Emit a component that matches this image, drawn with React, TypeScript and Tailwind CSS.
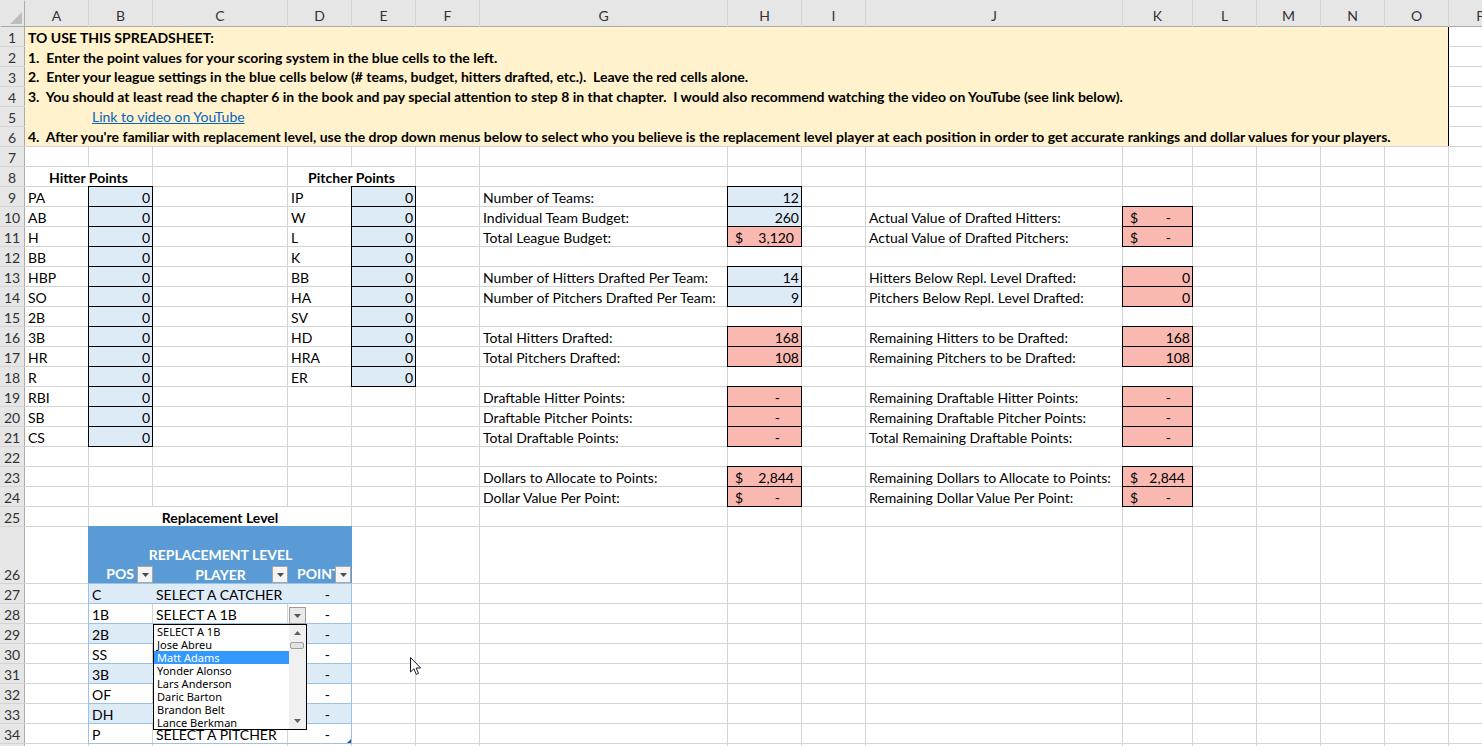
import React from 'react';

type Cell = {
  v?: React.ReactNode;
  cls?: string;
  align?: 'l' | 'r' | 'c' | 'dash' | 'acct' | 'raw';
};

const COLS = ['A', 'B', 'C', 'D', 'E', 'F', 'G', 'H', 'I', 'J', 'K', 'L', 'M', 'N', 'O', 'P'];
const ROWS = 35;

const BLUE = 'bg-[#DDEBF7] shadow-[0_0_0_1px_#000]';
const RED = 'bg-[#F9B9B1] shadow-[0_0_0_1px_#000]';

const data: Record<string, Cell> = {};
const covered = new Set<string>();

function merge(key: string, cell: Cell, cols: number, rows: number) {
  data[key] = cell;
  const ci = COLS.indexOf(key[0]);
  const r = parseInt(key.slice(1), 10);
  for (let i = 0; i < cols; i++)
    for (let j = 0; j < rows; j++) if (i || j) covered.add(COLS[ci + i] + (r + j));
}

function Dollar({ v }: { v: string }) {
  return (
    <span className="flex w-full justify-between">
      <span>$</span>
      <span className={v === '-' ? 'pr-[14px]' : ''}>{v}</span>
    </span>
  );
}

// instructions block
const notes = [
  'TO USE THIS SPREADSHEET:',
  '1.  Enter the point values for your scoring system in the blue cells to the left.',
  '2.  Enter your league settings in the blue cells below (# teams, budget, hitters drafted, etc.).  Leave the red cells alone.',
  '3.  You should at least read the chapter 6 in the book and pay special attention to step 8 in that chapter.  I would also recommend watching the video on YouTube (see link below).',
  '',
  "4.  After you're familiar with replacement level, use the drop down menus below to select who you believe is the replacement level player at each position in order to get accurate rankings and dollar values for your players.",
];

merge(
  'A1',
  {
    align: 'raw',
    cls: 'col-span-15 row-span-6 bg-[#FFF2CC] shadow-[1px_0_0_#000]',
    v: (
      <div className="flex w-full flex-col">
        {notes.map((n, i) => (
          <div key={i} className="flex h-[20px] items-end pb-[1px] pl-[3px] font-bold leading-[17px] whitespace-pre">
            {i === 4 ? (
              <span className="pl-[64px] font-normal text-[#0563C1] underline">Link to video on YouTube</span>
            ) : (
              n
            )}
          </div>
        ))}
      </div>
    ),
  },
  15,
  6
);

merge('A8', { v: 'Hitter Points', align: 'c', cls: 'col-span-2 bg-white font-bold' }, 2, 1);
merge('D8', { v: 'Pitcher Points', align: 'c', cls: 'col-span-2 bg-white font-bold' }, 2, 1);

const hitters = ['PA', 'AB', 'H', 'BB', 'HBP', 'SO', '2B', '3B', 'HR', 'R', 'RBI', 'SB', 'CS'];
hitters.forEach((h, i) => {
  data['A' + (9 + i)] = { v: h };
  data['B' + (9 + i)] = { v: '0', align: 'r', cls: BLUE };
});
const pitchers = ['IP', 'W', 'L', 'K', 'BB', 'HA', 'SV', 'HD', 'HRA', 'ER'];
pitchers.forEach((p, i) => {
  data['D' + (9 + i)] = { v: p };
  data['E' + (9 + i)] = { v: '0', align: 'r', cls: BLUE };
});

const league: [number, string, string, string, 'r' | 'dash' | 'acct'][] = [
  [9, 'Number of Teams:', '12', BLUE, 'r'],
  [10, 'Individual Team Budget:', '260', BLUE, 'r'],
  [11, 'Total League Budget:', '3,120', RED, 'acct'],
  [13, 'Number of Hitters Drafted Per Team:', '14', BLUE, 'r'],
  [14, 'Number of Pitchers Drafted Per Team:', '9', BLUE, 'r'],
  [16, 'Total Hitters Drafted:', '168', RED, 'r'],
  [17, 'Total Pitchers Drafted:', '108', RED, 'r'],
  [19, 'Draftable Hitter Points:', '-', RED, 'dash'],
  [20, 'Draftable Pitcher Points:', '-', RED, 'dash'],
  [21, 'Total Draftable Points:', '-', RED, 'dash'],
  [23, 'Dollars to Allocate to Points:', '2,844', RED, 'acct'],
  [24, 'Dollar Value Per Point:', '-', RED, 'acct'],
];
league.forEach(([r, label, v, cls, align]) => {
  data['G' + r] = { v: label };
  data['H' + r] = { v: align === 'acct' ? <Dollar v={v} /> : v, cls, align };
});

const remaining: [number, string, string, 'r' | 'dash' | 'acct'][] = [
  [10, 'Actual Value of Drafted Hitters:', '-', 'acct'],
  [11, 'Actual Value of Drafted Pitchers:', '-', 'acct'],
  [13, 'Hitters Below Repl. Level Drafted:', '0', 'r'],
  [14, 'Pitchers Below Repl. Level Drafted:', '0', 'r'],
  [16, 'Remaining Hitters to be Drafted:', '168', 'r'],
  [17, 'Remaining Pitchers to be Drafted:', '108', 'r'],
  [19, 'Remaining Draftable Hitter Points:', '-', 'dash'],
  [20, 'Remaining Draftable Pitcher Points:', '-', 'dash'],
  [21, 'Total Remaining Draftable Points:', '-', 'dash'],
  [23, 'Remaining Dollars to Allocate to Points:', '2,844', 'acct'],
  [24, 'Remaining Dollar Value Per Point:', '-', 'acct'],
];
remaining.forEach(([r, label, v, align]) => {
  data['J' + r] = { v: label };
  data['K' + r] = { v: align === 'acct' ? <Dollar v={v} /> : v, cls: RED, align };
});

merge('B25', { v: 'Replacement Level', align: 'c', cls: 'col-span-3 bg-white font-bold' }, 3, 1);

function FilterBtn() {
  return (
    <div className="absolute right-0 bottom-0 flex h-[17px] w-[16px] items-center justify-center border border-[#A6A6A6] bg-[#F4F4F4]">
      <svg width="7" height="4" viewBox="0 0 7 4">
        <path d="M0 0h7L3.5 4z" fill="#4a4a4a" />
      </svg>
    </div>
  );
}

merge(
  'B26',
  {
    align: 'raw',
    cls: 'col-span-3 bg-[#5B9BD5] shadow-[0_0_0_1px_#5B9BD5]',
    v: (
      <div className="flex h-full w-full font-bold text-white">
        <div className="relative flex w-[64px] items-end justify-end pr-[19px] pb-[1px] leading-[17px]">
          POS
          <FilterBtn />
        </div>
        <div className="relative flex w-[135px] items-end justify-center text-center leading-[20px]">
          <div className="mb-[-2px]">
            REPLACEMENT LEVEL
            <br />
            PLAYER
          </div>
          <FilterBtn />
        </div>
        <div className="relative flex w-[63px] items-end overflow-hidden pl-[9px] pb-[1px] leading-[17px]">
          POINTS
          <FilterBtn />
        </div>
      </div>
    ),
  },
  3,
  1
);

// rows hidden behind the open list show no text
const repl = [
  ['C', 'SELECT A CATCHER'],
  ['1B', 'SELECT A 1B'],
  ['2B', ''],
  ['SS', ''],
  ['3B', ''],
  ['OF', ''],
  ['DH', ''],
  ['P', 'SELECT A PITCHER'],
];
repl.forEach(([pos, player], i) => {
  const band = i % 2 === 0;
  merge(
    'B' + (27 + i),
    {
      align: 'raw',
      cls: band
        ? 'col-span-3 bg-[#DDEBF7] shadow-[0_0_0_1px_#9BC2E6]'
        : 'col-span-3 bg-white shadow-[0_0_0_1px_#9BC2E6]',
      v: (
        <div className="flex h-full w-full leading-[17px]">
          <div className={`flex w-[64px] items-end pl-[3px] ${band ? '' : 'border-r border-[#D4D4D4]'}`}>{pos}</div>
          <div className={`flex w-[135px] items-end pl-[3px] ${band ? '' : 'border-r border-[#D4D4D4]'}`}>{player}</div>
          <div className="flex w-[63px] items-end justify-end pr-[21px]">-</div>
        </div>
      ),
    },
    3,
    1
  );
});

const alignCls: Record<string, string> = {
  l: 'justify-start pl-[3px]',
  r: 'justify-end pr-[2px]',
  c: 'justify-center',
  dash: 'justify-end pr-[21px]',
  acct: 'pl-[7px] pr-[7px]',
  raw: 'items-stretch',
};

const players = [
  'SELECT A 1B',
  'Jose Abreu',
  'Matt Adams',
  'Yonder Alonso',
  'Lars Anderson',
  'Daric Barton',
  'Brandon Belt',
  'Lance Berkman',
];

export default function App() {
  const items: React.ReactNode[] = [];

  items.push(
    <div key="corner" className="relative bg-[#E6E6E6] shadow-[1px_1px_0_#ABABAB]">
      <svg className="absolute right-[2px] bottom-[2px]" width="12" height="12" viewBox="0 0 12 12">
        <path d="M12 0v12H0z" fill="#BDBDBD" />
      </svg>
    </div>
  );
  COLS.forEach((c) =>
    items.push(
      <div
        key={'h' + c}
        className="flex items-end justify-center bg-[#E6E6E6] pb-[2px] leading-[17px] text-[#333] shadow-[0_1px_0_#ABABAB]"
      >
        {c}
      </div>
    )
  );

  for (let r = 1; r <= ROWS; r++) {
    items.push(
      <div
        key={'r' + r}
        className="flex items-end justify-center bg-[#E6E6E6] leading-[17px] text-[#333] shadow-[1px_0_0_#ABABAB]"
      >
        {r}
      </div>
    );
    COLS.forEach((c) => {
      const key = c + r;
      if (covered.has(key)) return;
      const cell = data[key];
      if (!cell) {
        items.push(<div key={key} className="bg-white" />);
        return;
      }
      const a = cell.align ?? 'l';
      items.push(
        <div
          key={key}
          className={`flex min-w-0 items-end leading-[17px] whitespace-nowrap ${cell.cls ?? 'bg-white'} ${alignCls[a]}`}
        >
          {cell.v}
        </div>
      );
    });
  }

  return (
    <div className="relative h-[746px] w-[1482px] overflow-hidden bg-white font-[Lato,sans-serif] text-[14px] text-black">
      <div className="grid w-[1513px] grid-cols-[24px_63px_63px_134px_63px_63px_63px_247px_73px_63px_256px_69px_63px_63px_63px_63px_63px] grid-rows-[26px_repeat(25,19px)_56px_repeat(9,19px)] gap-px bg-[#D4D4D4]">
        {items}
      </div>

      {/* dropdown arrow on C28 */}
      <div className="absolute top-[607px] left-[289px] flex h-[17px] w-[17px] items-center justify-center border border-[#9C9C9C] bg-[#E9E9E9]">
        <svg width="7" height="4" viewBox="0 0 7 4">
          <path d="M0 0h7L3.5 4z" fill="#555" />
        </svg>
      </div>

      {/* open validation list */}
      <div className="absolute top-[624px] left-[153px] flex h-[106px] w-[154px] border border-black bg-white font-['Noto_Sans',sans-serif] text-[11px] leading-[13px]">
        <div className="flex-1">
          {players.map((p, i) => (
            <div key={p} className={`h-[13px] pl-[3px] ${i === 2 ? 'bg-[#3399FF] text-white' : 'text-black'}`}>
              {p}
            </div>
          ))}
        </div>
        <div className="relative w-[17px] bg-[#F0F0F0]">
          <svg className="absolute top-[6px] left-[5px]" width="7" height="4" viewBox="0 0 7 4">
            <path d="M3.5 0L7 4H0z" fill="#606060" />
          </svg>
          <div className="absolute top-[17px] left-[1px] h-[7px] w-[14px] rounded-[2px] border border-[#A0A0A0] bg-[#E2E2E2]" />
          <svg className="absolute bottom-[6px] left-[5px]" width="7" height="4" viewBox="0 0 7 4">
            <path d="M0 0h7L3.5 4z" fill="#606060" />
          </svg>
        </div>
      </div>

      {/* table resize handle */}
      <svg className="absolute top-[739px] left-[347px]" width="4" height="4" viewBox="0 0 4 4">
        <path d="M4 0v4H0z" fill="#2F5597" />
      </svg>

      {/* mouse pointer */}
      <svg className="absolute top-[656px] left-[409px]" width="13" height="20" viewBox="0 0 13 20">
        <path
          d="M1.5 1.5V16l3.4-3.2 2.4 5.6 2.2-1-2.4-5.4h4.6z"
          fill="#fff"
          stroke="#1a1a2e"
          strokeWidth="1"
          strokeLinejoin="round"
        />
      </svg>
    </div>
  );
}
